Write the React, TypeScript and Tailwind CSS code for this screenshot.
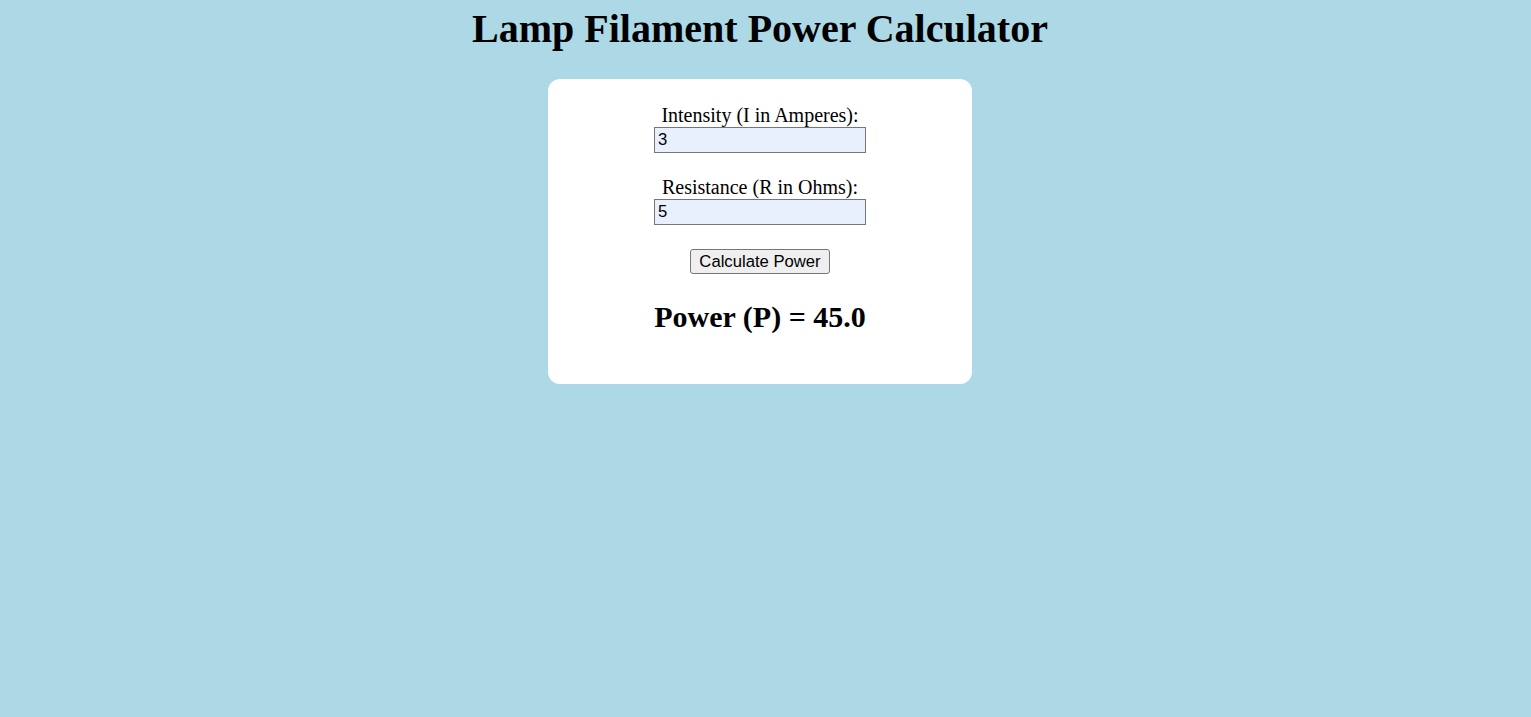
import React from "react";

export default function App() {
  return (
    <div className="min-h-screen w-full bg-[#add8e6]">
      <div className="w-[1520px] pt-[6px] pb-[20px]">
        <h1 className="m-0 mb-[27px] text-center text-[40px] leading-[46px] font-bold text-black [font-family:'Liberation_Serif','Times_New_Roman',serif]">
          Lamp Filament Power Calculator
        </h1>
        <div className="mx-auto flex w-[424px] flex-col items-center rounded-[12px] bg-white p-[25px] text-center text-black [font-family:'Liberation_Serif','Times_New_Roman',serif]">
          <label className="block text-[20px] leading-[23px]">Intensity (I in Amperes):</label>
          <input
            type="text"
            defaultValue="3"
            className="block h-[26px] w-[212px] border border-[#767676] bg-[#e8f0fe] pl-[3px] text-[16.67px] text-black outline-none [font-family:'Liberation_Sans',Arial,sans-serif]"
          />
          <label className="mt-[23px] block text-[20px] leading-[23px]">Resistance (R in Ohms):</label>
          <input
            type="text"
            defaultValue="5"
            className="block h-[26px] w-[212px] border border-[#767676] bg-[#e8f0fe] pl-[3px] text-[16.67px] text-black outline-none [font-family:'Liberation_Sans',Arial,sans-serif]"
          />
          <button
            type="button"
            className="mt-[24px] h-[25px] w-[140px] rounded-[3px] border border-[#767676] bg-[#efefef] p-0 text-[16.67px] leading-[23px] text-black [font-family:'Liberation_Sans',Arial,sans-serif]"
          >
            Calculate Power
          </button>
          <h2 className="m-0 mt-[26px] mb-[24px] text-[30px] leading-[34.5px] font-bold">Power (P) = 45.0</h2>
        </div>
      </div>
    </div>
  );
}
